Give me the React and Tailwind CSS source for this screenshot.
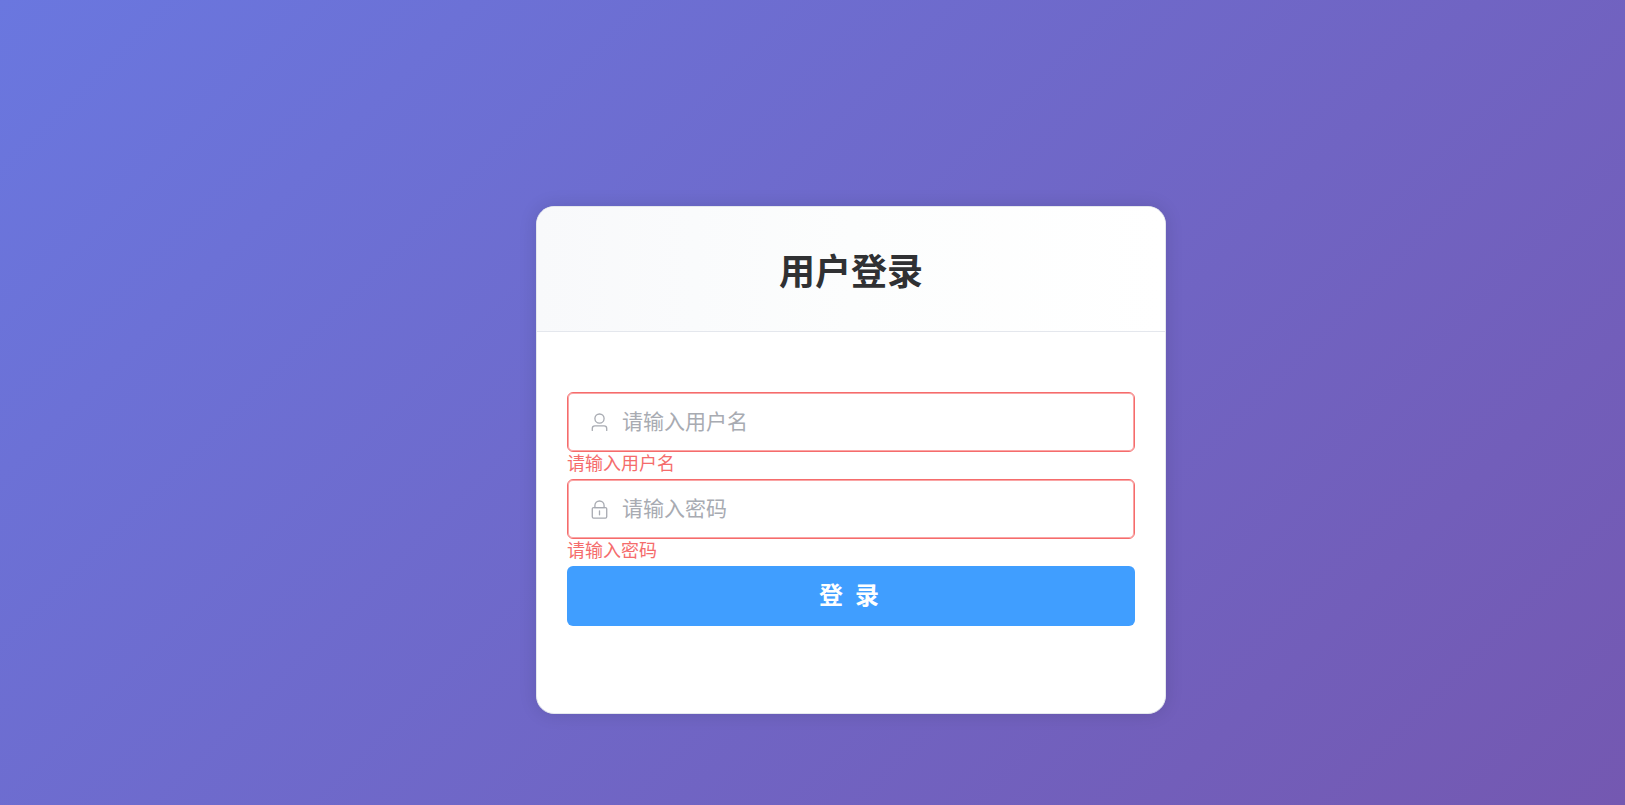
import React, { useState } from 'react';

const UserIcon = () => (
  <svg viewBox="0 0 1024 1024" fill="currentColor" className="w-[21px] h-[21px] shrink-0" aria-hidden="true">
    <path d="M512 512a192 192 0 1 0 0-384 192 192 0 0 0 0 384m0 64a256 256 0 1 1 0-512 256 256 0 0 1 0 512m320 320v-96a96 96 0 0 0-96-96H288a96 96 0 0 0-96 96v96a32 32 0 1 1-64 0v-96a160 160 0 0 1 160-160h448a160 160 0 0 1 160 160v96a32 32 0 1 1-64 0" />
  </svg>
);

const LockIcon = () => (
  <svg viewBox="0 0 1024 1024" fill="currentColor" className="w-[21px] h-[21px] shrink-0" aria-hidden="true">
    <path d="M224 448a32 32 0 0 0-32 32v384a32 32 0 0 0 32 32h576a32 32 0 0 0 32-32V480a32 32 0 0 0-32-32zm0-64h576a96 96 0 0 1 96 96v384a96 96 0 0 1-96 96H224a96 96 0 0 1-96-96V480a96 96 0 0 1 96-96" />
    <path d="M512 544a32 32 0 0 1 32 32v192a32 32 0 1 1-64 0V576a32 32 0 0 1 32-32m192-160v-64a192 192 0 1 0-384 0v64zM512 64a256 256 0 0 1 256 256v128H256V320A256 256 0 0 1 512 64" />
  </svg>
);

const Field = ({ id, type, icon, message, value, onChange }) => {
  const invalid = value === '';

  return (
    <div>
      <label
        htmlFor={id}
        className={
          invalid
            ? 'flex items-center gap-3 h-[60px] pl-[21px] pr-5 rounded-md border border-[#f56c6c] bg-white text-[#a8abb2] shadow-[inset_0_0_0_1px_#faa5a5]'
            : 'flex items-center gap-3 h-[60px] pl-[21px] pr-5 rounded-md border border-[#dcdfe6] bg-white text-[#a8abb2]'
        }
      >
        {icon}
        <input
          id={id}
          name={id}
          type={type}
          placeholder={message}
          aria-label={message}
          aria-invalid={invalid}
          value={value}
          onChange={(e) => onChange(e.target.value)}
          className="flex-1 min-w-0 pb-1 bg-transparent text-[21px] leading-8 text-[#606266] placeholder:text-[#a8abb2] focus:outline-none"
        />
      </label>
      <p className="h-[27px] text-lg leading-5 text-[#f56c6c]">{invalid ? message : ''}</p>
    </div>
  );
};

const App = () => {
  const [username, setUsername] = useState('');
  const [password, setPassword] = useState('');

  return (
    <div className="min-h-screen flex items-center justify-center pt-[115px] pl-[77px] bg-linear-[135deg,#6a77df_0%,#7458b1_100%] font-['Noto_Sans_CJK_SC',sans-serif]">
      <div className="w-full max-w-[630px] overflow-hidden rounded-[18px] border border-[#e4e7ed] bg-white shadow-[0_0_18px_rgba(0,0,0,0.12)]">
        <header className="py-9 border-b border-[#e4e7ed] bg-linear-[90deg,#f8f9fb,#fcfdfd_50%,#ffffff]">
          <h1 className="text-center text-4xl leading-[52px] font-bold text-[#303133]">用户登录</h1>
        </header>
        <form noValidate onSubmit={(e) => e.preventDefault()} className="px-[30px] pt-[60px] pb-[87px]">
          <Field id="username" type="text" icon={<UserIcon />} message="请输入用户名" value={username} onChange={setUsername} />
          <Field id="password" type="password" icon={<LockIcon />} message="请输入密码" value={password} onChange={setPassword} />
          <button
            type="submit"
            className="w-full h-[60px] pb-1 pr-1 rounded-md bg-[#409eff] text-2xl font-bold text-white cursor-pointer hover:bg-[#79bbff]"
          >
            登&ensp;录
          </button>
        </form>
      </div>
    </div>
  );
};

export default App;
